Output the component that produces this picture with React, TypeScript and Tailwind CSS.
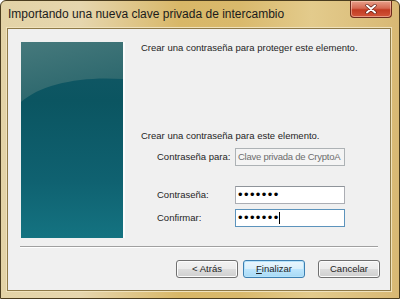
import React from "react";

const body = { fontFamily: '"Liberation Sans", Arial, sans-serif' };

function Btn({ children, primary }: { children: React.ReactNode; primary?: boolean }) {
  return (
    <div
      className={
        "w-[62px] h-[18px] rounded-[3px] border flex items-center justify-center text-[9.5px] text-[#1e1e1e] " +
        (primary
          ? "border-[#3c7fb1] bg-[linear-gradient(#eaf6fd_0%,#d9f0fc_50%,#bee6fd_51%,#a7d9f5_100%)] shadow-[inset_0_0_0_1px_#b6e3fb]"
          : "border-[#707070] bg-[linear-gradient(#f2f2f2_0%,#ebebeb_50%,#dddddd_51%,#cfcfcf_100%)] shadow-[inset_0_0_0_1px_#fcfcfc]")
      }
      style={body}
    >
      {children}
    </div>
  );
}

export default function App() {
  return (
    <div
      className="w-[400px] h-[299px] flex flex-col overflow-hidden border border-[#4a3c1e] rounded-t-[6px] bg-[linear-gradient(90deg,#e3d3a6_0%,#e6d6ae_20%,#d8b767_45%,#d9b96c_60%,#e3cb8c_78%,#d8b874_100%)]"
      style={body}
    >
      {/* title bar */}
      <div className="h-[27px] flex items-start justify-between shrink-0">
        <div className="pl-[7px] pt-[6px] text-[12px] leading-[14px] text-[#1b1b1b]">
          Importando una nueva clave privada de intercambio
        </div>
        <div className="mr-[7px] w-[42px] h-[17px] rounded-b-[4px] border border-t-0 border-[#6e2a1c] bg-[linear-gradient(#e8a08a_0%,#d56a52_45%,#c23b22_55%,#d2553a_100%)] flex items-center justify-center shadow-[inset_0_0_0_1px_rgba(255,220,200,0.5)]">
          <svg width="12" height="10" viewBox="0 0 12 10">
            <path d="M2 1.5 L10 8.5 M10 1.5 L2 8.5" stroke="#5a1a10" strokeWidth="3.2" strokeLinecap="round" />
            <path d="M2 1.5 L10 8.5 M10 1.5 L2 8.5" stroke="#ffffff" strokeWidth="2" strokeLinecap="round" />
          </svg>
        </div>
      </div>

      {/* client area */}
      <div className="ml-[6px] mr-[8px] h-[263px] border border-[#8e7a48] shadow-[0_0_0_1px_#f0e2bc] bg-[#f0f0f0] flex flex-col">
        <div className="flex pl-[13px] pt-[13px]">
          <div className="relative w-[104px] h-[196px] shrink-0 flex">
            <div className="relative w-[102px] h-[196px] overflow-hidden bg-[linear-gradient(#145866_0%,#0b5561_30%,#0f6170_70%,#147381_100%)]">
              <svg className="absolute left-0 top-0" width="102" height="196" viewBox="0 0 102 196">
                <defs>
                  <linearGradient id="gl" x1="0" y1="0" x2="0.4" y2="1">
                    <stop offset="0" stopColor="#46797c" />
                    <stop offset="1" stopColor="#2a666c" />
                  </linearGradient>
                </defs>
                <path d="M0 0 H102 V37 C60 34 20 42 0 60 Z" fill="url(#gl)" />
              </svg>
            </div>
            <div className="w-[2px] h-[196px] bg-[#ffffff] opacity-80" />
          </div>

          <div className="pl-[16px] flex flex-col text-[9.5px] leading-[12px] text-[#1e1e1e]">
            <div>Crear una contraseña para proteger este elemento.</div>
            <div className="mt-[76px]">Crear una contraseña para este elemento.</div>

            <div className="mt-[6px] flex items-center">
              <div className="w-[94px] pl-[16px] whitespace-nowrap">Contraseña para:</div>
              <div className="w-[110px] h-[18px] border border-[#adb2b5] bg-[#f4f4f4] flex items-center pl-[2px] text-[#6d6d6d] overflow-hidden whitespace-nowrap tracking-[-0.25px]">
                Clave privada de CryptoA
              </div>
            </div>

            <div className="mt-[20px] flex items-center">
              <div className="w-[94px] pl-[16px] whitespace-nowrap">Contraseña:</div>
              <div className="w-[110px] h-[18px] border border-[#abadb3] border-t-[#8f949a] bg-white flex items-center pl-[2px] overflow-hidden">
                <span className="text-[13px] leading-[12px] tracking-[1.4px] text-black">•••••••</span>
              </div>
            </div>

            <div className="mt-[5px] flex items-center">
              <div className="w-[94px] pl-[16px] whitespace-nowrap">Confirmar:</div>
              <div className="w-[110px] h-[18px] border border-[#5c93bc] bg-white flex items-center pl-[2px] overflow-hidden">
                <span className="text-[13px] leading-[12px] tracking-[1.4px] text-black">•••••••</span>
                <span className="w-[1px] h-[12px] bg-black -ml-[1px]" />
              </div>
            </div>
          </div>
        </div>

        <div className="mx-[12px] mt-[8px] h-[1px] bg-[#a0a0a0]" />
        <div className="mx-[12px] h-[1px] bg-[#ffffff]" />

        <div className="mt-[12px] flex justify-end pr-[10px]">
          <Btn>&lt; Atrás</Btn>
          <div className="ml-[5px]">
            <Btn primary>
              <span>
                <span className="underline">F</span>inalizar
              </span>
            </Btn>
          </div>
          <div className="ml-[13px]">
            <Btn>Cancelar</Btn>
          </div>
        </div>
      </div>
    </div>
  );
}
